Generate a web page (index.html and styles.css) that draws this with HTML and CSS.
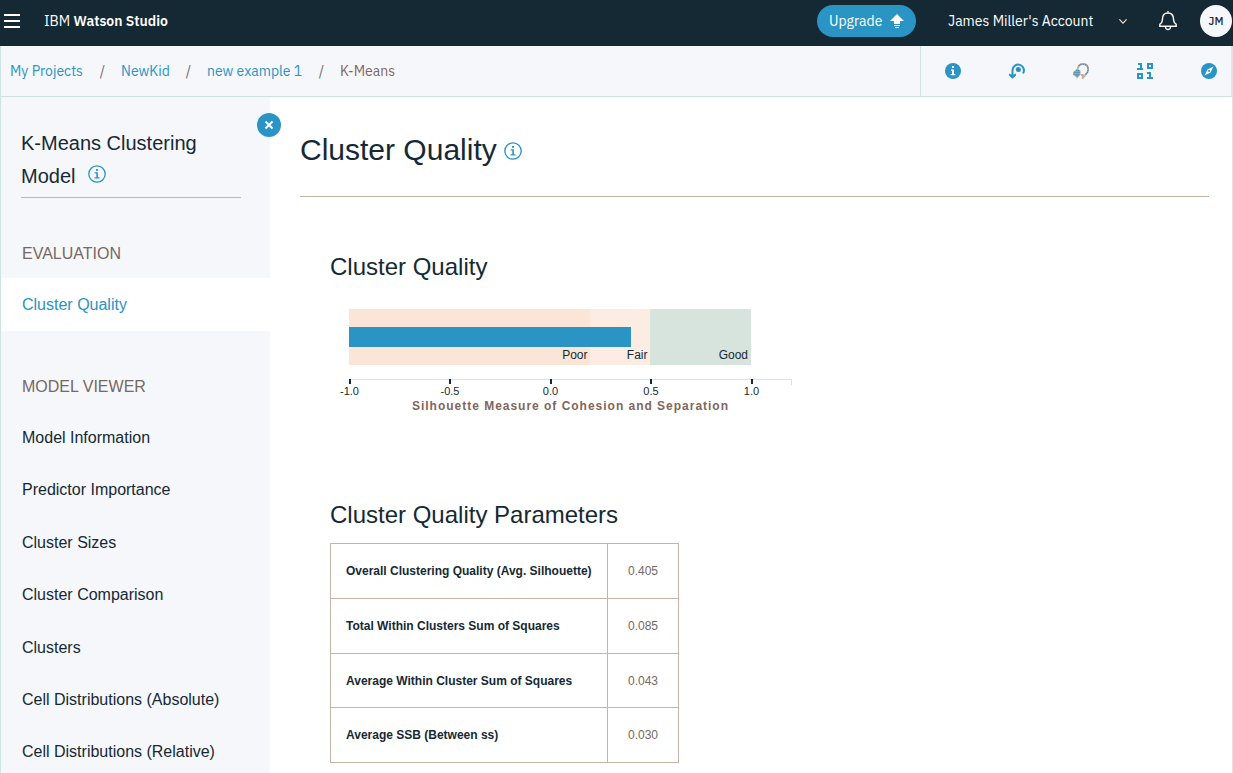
FILE: index.html
```html
<!DOCTYPE html>
<html lang="en">
<head>
<meta charset="utf-8">
<title>IBM Watson Studio</title>
<link rel="stylesheet" href="styles.css">
</head>
<body>
<header class="topbar">
  <svg class="menu" width="16" height="14" viewBox="0 0 16 14"><path d="M0 1h16M0 7h16M0 13h16" stroke="#fff" stroke-width="2"/></svg>
  <div class="brand"><span class="brand-ibm">IBM</span> <b>Watson Studio</b></div>
  <button class="upgrade"><span>Upgrade</span>
    <svg width="14" height="14" viewBox="0 0 14 14"><path d="M7 0L14 7H10V10H4V7H0ZM4 11h6v1H4ZM5 13h4v1H5Z" fill="#fff"/></svg>
  </button>
  <div class="account">James Miller's Account</div>
  <svg class="chevron" width="8" height="5" viewBox="0 0 8 5"><path d="M.4.4L4 4.1L7.6.4" fill="none" stroke="#f9e4d6" stroke-width="1.1"/></svg>
  <svg class="bell" width="18" height="20" viewBox="0 0 18 20"><g fill="none" stroke="#f7f2ee" stroke-width="1.4"><path d="M9 0v2M9 2C5.500 2 3.500 4.500 3.500 8C3.500 11 2.900 12 .8 13.300V15.300H17.200V13.300C15.100 12 14.500 11 14.500 8C14.500 4.500 12.500 2 9 2Z"/><path d="M6.500 16Q6.700 18.500 9 18.500T11.500 16"/></g></svg>
  <div class="avatar">JM</div>
</header>
<nav class="crumbs">
  <div class="trail">
    <a class="c1">My Projects</a><i>/</i><a class="c2">NewKid</a><i>/</i><a class="c3">new example 1</a><i>/</i><span class="c4">K-Means</span>
  </div>
  <div class="tools">
    <svg width="16" height="16" viewBox="0 0 16 16"><circle cx="8" cy="8" r="8" fill="#2a94c4"/><path d="M7 3h2v2H7ZM6 6.500h3V11h1.300v1.200H5.700V11H7V7.700H6Z" fill="#fff"/></svg>
    <svg width="16" height="16" viewBox="0 0 16 16"><path d="M3.500 13V7A5.700 5.700 0 1 1 14 10.400" fill="none" stroke="#2a94c4" stroke-width="2"/><path d="M0 10.500L3.500 12L7 10.500V12.500L3.500 15.700L0 12.500Z" fill="#2a94c4"/><circle cx="9.300" cy="6.500" r="2.600" fill="#2a94c4"/></svg>
    <svg width="16" height="16" viewBox="0 0 16 16"><path d="M4.800 6.500Q4.800 1 10 1Q15.200 1.100 15.200 6.500Q15 10.300 12.500 11.700L9.700 15V12H8" fill="none" stroke="#c6aa9b" stroke-width="1.800"/><path d="M6 2.900Q7 1.200 10 1.200Q15 1.400 15 6.500Q14.800 10 12 11.700" fill="none" stroke="#2a94c4" stroke-width="1.400" stroke-dasharray="1.200 .9"/><path d="M4 6L7.500 7.500V12L5.500 13.200L4 15.800L3.300 13.400L.2 12V9Z" fill="#a99d97"/><path d="M1.500 9.500h6M.5 11.500h6M3 7.500h4M2.500 13h3" stroke="#2a94c4" stroke-dasharray="1 1"/></svg>
    <svg width="17" height="16" viewBox="0 0 17 16"><g fill="none" stroke="#2a94c4" stroke-width="2"><path d="M1 1h3v5M0 6h6M11 1h4v4h-4ZM1 11h4v4H1ZM10 10h3v5M10 15h6"/></g></svg>
    <svg class="compass" width="16" height="16" viewBox="0 0 16 16"><circle cx="8" cy="8" r="8" fill="#2a94c4"/><path d="M12.500 3.500L9.500 9.500L3.500 12.500L6.500 6.500Z" fill="#fff"/><circle cx="8" cy="8" r="1" fill="#2a94c4"/></svg>
  </div>
</nav>
<div class="body">
  <aside class="side">
    <button class="close"><svg width="8" height="8" viewBox="0 0 8 8"><path d="M.5.5L7.500 7.500M7.500.5L.5 7.500" stroke="#fff" stroke-width="2"/></svg></button>
    <h2 class="side-title">K-Means Clustering<br>Model<svg class="info" width="18" height="18" viewBox="0 0 18 18"><circle cx="9" cy="9" r="8.200" fill="none" stroke="#2a94c4" stroke-width="1.300"/><path d="M8 4h2v1.700H8ZM6.700 7.300H9.900V12.300H11.500V13.500H6.500V12.300H8.300V8.500H6.700Z" fill="#2a94c4"/></svg></h2>
    <div class="group">EVALUATION</div>
    <a class="item active">Cluster Quality</a>
    <div class="group second">MODEL VIEWER</div>
    <a class="item">Model Information</a>
    <a class="item">Predictor Importance</a>
    <a class="item">Cluster Sizes</a>
    <a class="item">Cluster Comparison</a>
    <a class="item">Clusters</a>
    <a class="item">Cell Distributions (Absolute)</a>
    <a class="item">Cell Distributions (Relative)</a>
  </aside>
  <main class="main">
    <h1>Cluster Quality<svg class="info-lg" width="18" height="18" viewBox="0 0 18 18"><circle cx="9" cy="9" r="8.200" fill="none" stroke="#2a94c4" stroke-width="1.300"/><path d="M8 4h2v1.700H8ZM6.700 7.300H9.900V12.300H11.500V13.500H6.500V12.300H8.300V8.500H6.700Z" fill="#2a94c4"/></svg></h1>
    <section class="content">
      <h3>Cluster Quality</h3>
      <svg class="chart" width="480" height="110" viewBox="330 309 480 110">
        <g shape-rendering="crispEdges">
          <rect x="349" y="309" width="241" height="56" fill="#fbe5d6"/>
          <rect x="590" y="309" width="60" height="56" fill="#fcece1"/>
          <rect x="650" y="309" width="101" height="56" fill="#d6e4dd"/>
          <rect x="349" y="327" width="282" height="20" fill="#2a94c4"/>
          <path d="M349 379.500H791.500V385" fill="none" stroke="#d9e3e1"/>
          <path d="M349.500 379v5M450 379v5M550.500 379v5M651 379v5M751.500 379v5" stroke="#152935" stroke-width="2"/>
        </g>
        <g class="band" text-anchor="end"><text x="587.500" y="359">Poor</text><text x="647.500" y="359">Fair</text><text x="748" y="359">Good</text></g>
        <g class="tick" text-anchor="middle"><text x="349.500" y="395">-1.0</text><text x="450" y="395">-0.5</text><text x="550.500" y="395">0.0</text><text x="651" y="395">0.5</text><text x="751.500" y="395">1.0</text></g>
        <text class="axis" x="412" y="410" textLength="317">Silhouette Measure of Cohesion and Separation</text>
      </svg>
      <h3 class="params">Cluster Quality Parameters</h3>
      <div class="table">
        <div class="row"><b>Overall Clustering Quality (Avg. Silhouette)</b><span>0.405</span></div>
        <div class="row"><b>Total Within Clusters Sum of Squares</b><span>0.085</span></div>
        <div class="row short"><b>Average Within Cluster Sum of Squares</b><span>0.043</span></div>
        <div class="row"><b>Average SSB (Between ss)</b><span>0.030</span></div>
      </div>
    </section>
  </main>
</div>
</body>
</html>
```
FILE: styles.css
```css
* { box-sizing: border-box; }
body { margin: 0; height: 773px; overflow: hidden; background: #fff; color: #152935; font-family: "Liberation Sans", Arial, sans-serif; display: flex; flex-direction: column; }
button { border: 0; padding: 0; font: inherit; color: #fff; }
svg { display: block; flex: none; }
h1, h2, h3 { margin: 0; font-weight: 400; }

.topbar { height: 46px; flex: none; background: #152935; color: #fff; display: flex; align-items: center; padding: 0 1px 4px 4px; font: 14px "IBM Plex Sans", Roboto, sans-serif; white-space: nowrap; }
.brand { margin-left: 24px; width: 773px; }
.brand b { font-weight: 600; }
.upgrade { width: 99px; height: 32px; border-radius: 16px; background: #2a94c4; display: flex; align-items: center; gap: 8px; padding-left: 12px; }
.upgrade span { width: 53px; }
.account { margin-left: 32px; width: 171px; }
.bell { margin-left: 32px; }
.avatar { margin-left: auto; width: 32px; height: 32px; border-radius: 50%; background: #f5f7fb; color: #152935; font-size: 11px; font-weight: 500; display: flex; align-items: center; justify-content: center; }

.crumbs { height: 51px; flex: none; background: #f5f7fb; border-bottom: 1px solid #cce0de; border-left: 1px solid #cce5e3; border-right: 2px solid #d5e7e6; display: flex; justify-content: space-between; font: 14px "IBM Plex Sans", Roboto, sans-serif; color: #80665c; }
.trail { display: flex; align-items: center; padding: 0 0 1px 9px; white-space: nowrap; }
.trail i { font-style: normal; width: 37px; text-align: center; color: #6f6964; }
.trail a { color: #2a94c4; }
.c1 { width: 74px; }
.c2 { width: 49px; }
.c3 { width: 96px; }
.tools { width: 311px; border-left: 1px solid #cce5e3; display: flex; align-items: center; gap: 48px; padding-left: 24px; }
.compass { margin-left: -1px; }

.body { flex: 1; min-height: 0; display: flex; border-right: 1px solid #d5e7e6; }
.side { position: relative; width: 270px; flex: none; background: #f5f7fb; border-left: 1px solid #cce5e3; font-size: 16px; }
.close { position: absolute; left: 256px; top: 16px; width: 24px; height: 24px; border-radius: 50%; background: #2a94c4; display: flex; align-items: center; justify-content: center; }
.side-title { margin: 30px 29px 0 20px; height: 71px; font-size: 20px; line-height: 33px; border-bottom: 1px solid #c6b4a8; }
.info { display: inline-block; margin-left: 13px; vertical-align: 0; }
.group { margin-top: 29px; height: 51px; padding-left: 21px; line-height: 54px; color: #776862; }
.group.second { height: 52px; line-height: 53px; }
.item { display: block; height: 52.400px; padding-left: 21px; line-height: 52px; }
.item.active { height: 53px; line-height: 54px; background: #fff; color: #2a94c4; }

.main { flex: 1; padding: 0 23px 0 30px; }
.main h1 { height: 100px; border-bottom: 1px solid #c6b4a8; font-size: 30px; line-height: 106px; display: flex; }
.info-lg { margin: 45px 0 0 7px; }
.content { padding-left: 30px; }
h3 { font-size: 24px; line-height: 28px; padding-top: 56px; }
.chart { margin-top: 28px; }
.band { font-size: 12px; fill: #152935; }
.tick { font-size: 11px; fill: #152935; }
.axis { font-size: 12px; font-weight: 700; letter-spacing: 1px; fill: #80665c; }
h3.params { padding-top: 82px; }
.table { margin-top: 14px; width: 349px; border: 1px solid #c6b4a8; border-bottom: 0; font-size: 12px; }
.row { height: 55px; border-bottom: 1px solid #c6b4a8; display: flex; line-height: 54px; }
.row.short { height: 54px; }
.row b { width: 277px; padding-left: 15px; border-right: 1px solid #c6b4a8; white-space: nowrap; }
.row span { flex: 1; text-align: center; color: #776862; }
```
